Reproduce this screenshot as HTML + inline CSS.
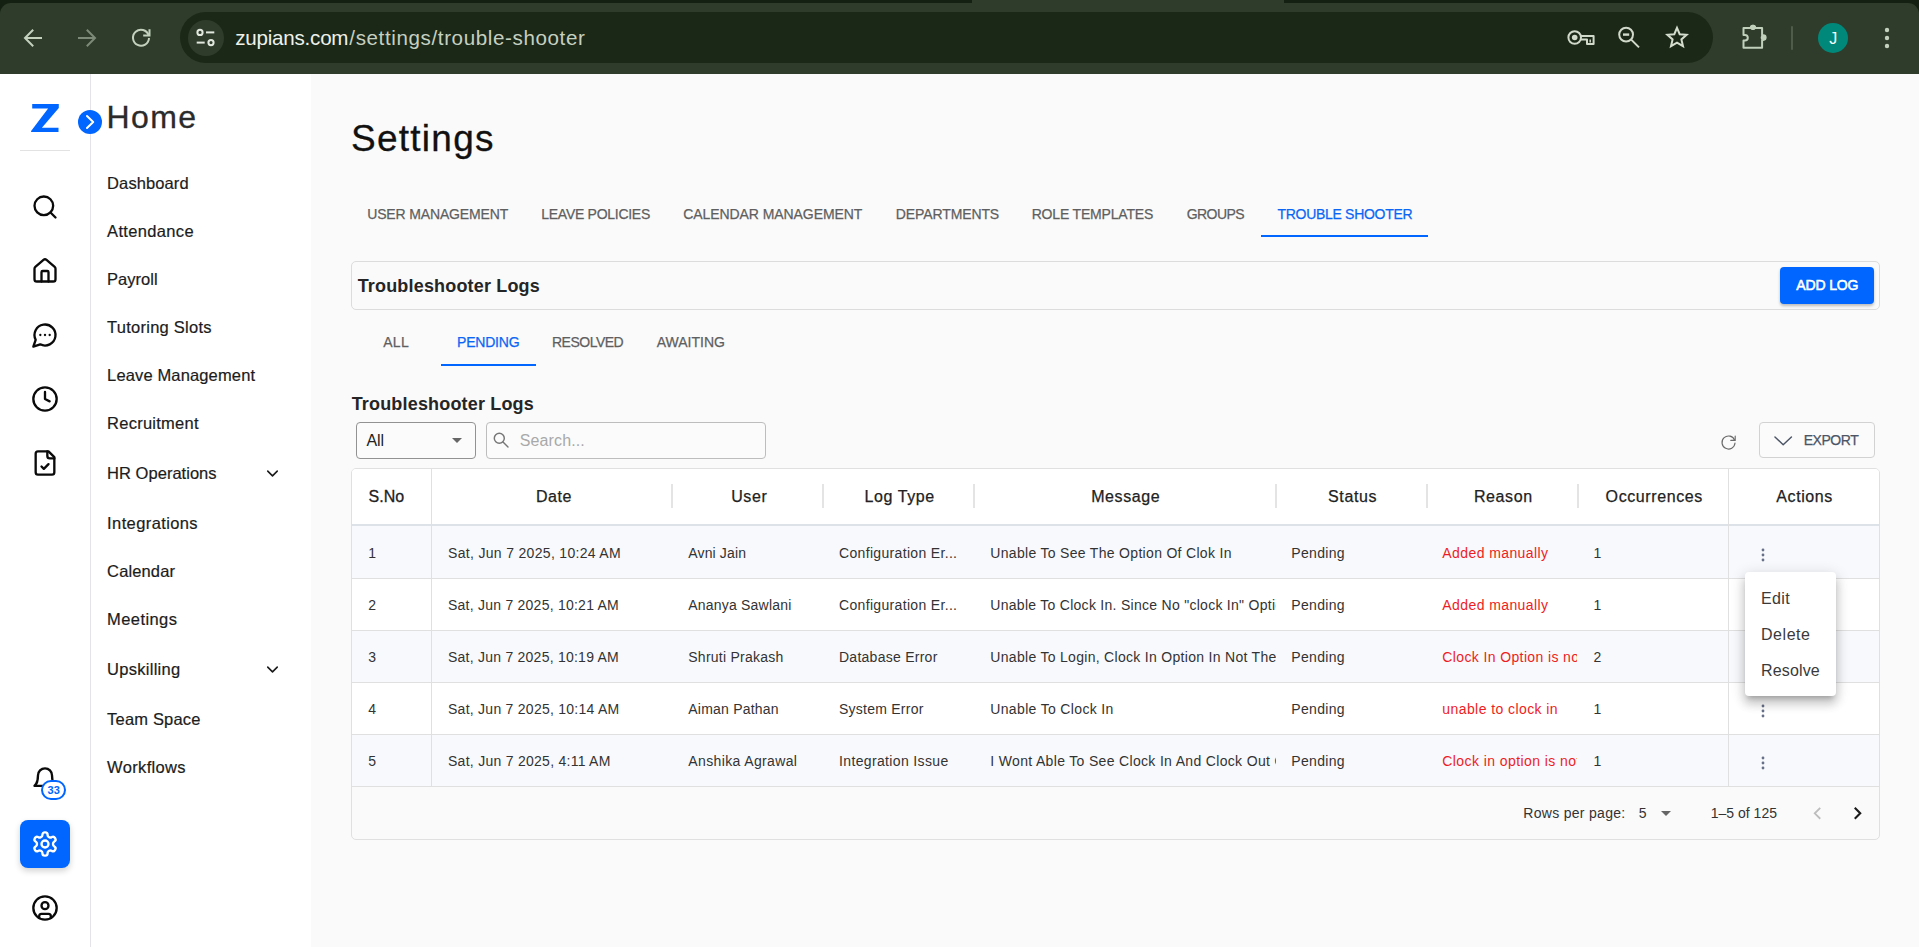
<!DOCTYPE html>
<html lang="en">
<head>
<meta charset="utf-8">
<title>Settings</title>
<style>
*{box-sizing:border-box;margin:0;padding:0}
html,body{width:1919px;height:947px;overflow:hidden;background:#fafafa;font-family:"Liberation Sans",sans-serif;color:#1a1a1a}
.a{position:absolute}
.t{position:absolute;white-space:nowrap;line-height:1}
svg{position:absolute;overflow:visible}
.lu{fill:none;stroke:#0a0a0a;stroke-width:2;stroke-linecap:round;stroke-linejoin:round}
/* browser chrome */
#chrome{position:absolute;left:0;top:0;width:1919px;height:74px;background:#2f3c2c;overflow:hidden}
#strip{position:absolute;left:0;top:0;width:1919px;height:14px;background:#142011}
#tbar{position:absolute;left:0;top:3px;width:1919px;height:71px;background:#2f3c2c;border-radius:11px 11px 0 0}
#acttab{position:absolute;left:972px;top:0;width:312px;height:6px;background:#2f3c2c}
#pill{position:absolute;left:180px;top:12px;width:1533px;height:51px;border-radius:26px;background:#1b2818}
#site{position:absolute;left:187.5px;top:19.5px;width:36px;height:36px;border-radius:50%;background:#2f3c2c}
#avatar{position:absolute;left:1818px;top:23px;width:30px;height:30px;border-radius:50%;background:#00897b}
#sepv{position:absolute;left:1791px;top:26px;width:2px;height:24px;background:#4f5c4a;border-radius:1px}
.ci{fill:none;stroke:#c4d1bd;stroke-width:2;stroke-linecap:butt;stroke-linejoin:miter}
/* rails */
#rail{position:absolute;left:0;top:74px;width:91px;height:873px;background:#fff;border-right:1px solid #e3e3e9}
#side{position:absolute;left:91px;top:74px;width:220px;height:873px;background:#fff}
</style>
</head>
<body>
<!-- ===== Browser chrome ===== -->
<div id="chrome">
  <div id="strip"></div>
  <div id="tbar"></div>
  <div id="acttab"></div>
  <div id="pill"></div>
  <div id="site"></div>
  <div id="sepv"></div>
  <div id="avatar"></div>
  <!-- back -->
  <svg class="ci" style="left:21px;top:26px" width="24" height="24" viewBox="0 0 24 24"><path d="M21 12H4.5M12.2 3.8 4 12l8.2 8.2"/></svg>
  <!-- forward (dim) -->
  <svg class="ci" style="left:75px;top:26px;stroke:#7d8a77" width="24" height="24" viewBox="0 0 24 24"><path d="M3 12h16.5M11.8 3.8 20 12l-8.2 8.2"/></svg>
  <!-- reload -->
  <svg class="ci" style="left:129px;top:26px" width="24" height="24" viewBox="0 0 24 24"><path d="M19.6 9.2A8 8 0 1 0 20 12"/><path d="M20.5 3.2v6.3h-6.3"/></svg>
  <!-- site settings (tune) -->
  <svg class="ci" style="left:193px;top:26px;stroke:#e3e8df" width="24" height="24" viewBox="0 0 24 24"><circle cx="7" cy="6.4" r="2.6"/><path d="M13 6.4h8.3"/><circle cx="18" cy="16.6" r="2.6"/><path d="M3.7 16.6h8"/></svg>
  <!-- key / zoom-out / puzzle (absolute coords) -->
  <svg style="left:0;top:0" width="1919" height="74" viewBox="0 0 1919 74" fill="none" stroke-width="2">
    <g stroke="#d1d9cb" stroke-linejoin="round">
      <circle cx="1574.7" cy="37.5" r="6.3"/>
      <circle cx="1574.7" cy="37.5" r="2.8" fill="#d1d9cb" stroke="none"/>
      <path d="M1580.8 36.1H1593.6V44H1587V39.6H1580.6"/>
      <path d="M1590.2 39.6v3" stroke-width="1.5"/>
      <circle cx="1626.1" cy="34.6" r="6.9"/>
      <path d="M1631.2 39.6 1639 47.4"/>
      <path d="M1623 34.6h6.2" stroke-width="2.4"/>
    </g>
    <path stroke="#c0d0ba" stroke-linejoin="round" d="M1743.5 28H1750.8a2.2 2.2 0 0 1 4.4 0H1762.1V35.3h1.2a2.3 2.3 0 0 1 0 4.6h-1.2V47.8H1743.5V40.6h1.5a2.8 2.8 0 0 0 0-5.6h-1.5Z"/>
    <circle cx="1753" cy="27.4" r="2.6" fill="#c0d0ba"/><circle cx="1763.4" cy="37.6" r="2.7" fill="#c0d0ba"/>
  </svg>
  <!-- star -->
  <svg class="ci" style="left:1665px;top:25px;stroke:#d3dccd" width="24" height="24" viewBox="0 0 24 24"><path d="M12 2.8l2.7 6.4 6.9.6-5.2 4.6 1.6 6.8-6-3.6-6 3.6 1.6-6.8-5.2-4.6 6.9-.6z" stroke-linejoin="miter"/></svg>
  <!-- kebab -->
  <svg style="left:1883px;top:26px" width="8" height="24" viewBox="0 0 8 24"><circle cx="4" cy="4" r="2.2" fill="#c4d1bd"/><circle cx="4" cy="12" r="2.2" fill="#c4d1bd"/><circle cx="4" cy="20" r="2.2" fill="#c4d1bd"/></svg>
</div>

<!-- ===== Icon rail ===== -->
<div id="rail"></div>
<div id="side"></div>
<!-- Z logo -->
<svg style="left:0;top:0" width="100" height="160" viewBox="0 0 100 160"><polygon fill="#0066ff" points="32.2,104 58.8,104 58.8,108 41.9,127.7 58.5,127.7 58.5,132.1 31.1,132.1 31.1,130.9 48.1,108.5 32.2,108.5"/></svg>
<div class="a" style="left:20px;top:150px;width:50px;height:1px;background:#e2e2e2"></div>
<!-- collapse chevron circle -->
<div class="a" style="left:78px;top:110px;width:24px;height:24px;border-radius:50%;background:#0066ff"></div>
<svg style="left:78px;top:110px" width="24" height="24" viewBox="0 0 24 24" fill="none" stroke="#fff" stroke-width="2" stroke-linecap="round" stroke-linejoin="round"><path d="m9 6 6.2 6L9 18"/></svg>
<!-- search -->
<svg class="lu" style="left:31px;top:193px" width="28" height="28" viewBox="0 0 24 24"><circle cx="11" cy="11" r="8"/><path d="m21 21-4.3-4.3"/></svg>
<!-- house -->
<svg class="lu" style="left:31px;top:257px" width="28" height="28" viewBox="0 0 24 24"><path d="M15 21v-8a1 1 0 0 0-1-1h-4a1 1 0 0 0-1 1v8"/><path d="M3 10a2 2 0 0 1 .709-1.528l7-5.999a2 2 0 0 1 2.582 0l7 5.999A2 2 0 0 1 21 10v9a2 2 0 0 1-2 2H5a2 2 0 0 1-2-2z"/></svg>
<!-- message-circle-more -->
<svg class="lu" style="left:31px;top:321px" width="28" height="28" viewBox="0 0 24 24"><path d="M7.9 20A9 9 0 1 0 4 16.1L2 22Z"/><path d="M8 12h.01"/><path d="M12 12h.01"/><path d="M16 12h.01"/></svg>
<!-- clock -->
<svg class="lu" style="left:31px;top:385px" width="28" height="28" viewBox="0 0 24 24"><circle cx="12" cy="12" r="10"/><polyline points="12 6 12 12 16 14"/></svg>
<!-- file-check -->
<svg class="lu" style="left:31px;top:449px" width="28" height="28" viewBox="0 0 24 24"><path d="M15 2H6a2 2 0 0 0-2 2v16a2 2 0 0 0 2 2h12a2 2 0 0 0 2-2V7Z"/><path d="M14 2v4a2 2 0 0 0 2 2h4"/><path d="m9 15 2 2 4-4"/></svg>
<!-- bell -->
<svg class="lu" style="left:31px;top:766px" width="28" height="28" viewBox="0 0 24 24"><path d="M6 8a6 6 0 0 1 12 0c0 7 3 9 3 9H3s3-2 3-9"/><path d="M10.3 21a1.94 1.94 0 0 0 3.4 0"/></svg>
<div class="a" style="left:41px;top:780px;width:25px;height:20px;border-radius:10px;background:#fff;border:2px solid #0066ff"></div>
<!-- settings active -->
<div class="a" style="left:20px;top:820px;width:50px;height:48px;border-radius:8px;background:#0066ff;box-shadow:0 3px 6px rgba(0,0,0,.18)"></div>
<svg class="lu" style="left:31px;top:830px;stroke:#fff" width="28" height="28" viewBox="0 0 24 24"><path d="M12.22 2h-.44a2 2 0 0 0-2 2v.18a2 2 0 0 1-1 1.73l-.43.25a2 2 0 0 1-2 0l-.15-.08a2 2 0 0 0-2.73.73l-.22.38a2 2 0 0 0 .73 2.73l.15.1a2 2 0 0 1 1 1.72v.51a2 2 0 0 1-1 1.74l-.15.09a2 2 0 0 0-.73 2.73l.22.38a2 2 0 0 0 2.73.73l.15-.08a2 2 0 0 1 2 0l.43.25a2 2 0 0 1 1 1.73V20a2 2 0 0 0 2 2h.44a2 2 0 0 0 2-2v-.18a2 2 0 0 1 1-1.73l.43-.25a2 2 0 0 1 2 0l.15.08a2 2 0 0 0 2.73-.73l.22-.39a2 2 0 0 0-.73-2.73l-.15-.08a2 2 0 0 1-1-1.74v-.5a2 2 0 0 1 1-1.74l.15-.09a2 2 0 0 0 .73-2.73l-.22-.38a2 2 0 0 0-2.73-.73l-.15.08a2 2 0 0 1-2 0l-.43-.25a2 2 0 0 1-1-1.73V4a2 2 0 0 0-2-2z"/><circle cx="12" cy="12" r="3"/></svg>
<!-- user -->
<svg class="lu" style="left:31px;top:894px" width="28" height="28" viewBox="0 0 24 24"><circle cx="12" cy="12" r="10"/><circle cx="12" cy="10" r="3"/><path d="M7 20.662V19a2 2 0 0 1 2-2h6a2 2 0 0 1 2 2v1.662"/></svg>
<!-- sidebar chevrons -->
<svg class="lu" style="left:263.4px;top:463.8px;stroke:#1a1a1a;stroke-width:2" width="19" height="19" viewBox="0 0 24 24"><path d="m6 9 6 6 6-6"/></svg>
<svg class="lu" style="left:263.4px;top:659.8px;stroke:#1a1a1a;stroke-width:2" width="19" height="19" viewBox="0 0 24 24"><path d="m6 9 6 6 6-6"/></svg>

<!-- top tab underline -->
<div class="a" style="left:1261px;top:235px;width:167px;height:2px;background:#0066ff"></div>
<!-- title card -->
<div class="a" style="left:351px;top:261px;width:1529px;height:49px;border:1px solid #dcdcdc;border-radius:5px;background:#fafafa"></div>
<div class="a" style="left:1780px;top:267px;width:94px;height:37px;border-radius:4px;background:#0066ff;box-shadow:0 2px 3px rgba(0,0,0,.25)"></div>
<!-- sub tab underline -->
<div class="a" style="left:441px;top:364px;width:95px;height:2px;background:#0066ff"></div>
<!-- select -->
<div class="a" style="left:356px;top:422px;width:120px;height:37px;border:1px solid #929292;border-radius:4px;background:#fbfbfb"></div>
<svg style="left:452px;top:438px" width="10" height="5" viewBox="0 0 10 5"><path d="M0 0h10L5 5z" fill="#666"/></svg>
<!-- search -->
<div class="a" style="left:486px;top:422px;width:280px;height:37px;border:1px solid #bdbdbd;border-radius:4px;background:#fbfbfb"></div>
<svg style="left:493px;top:432px" width="16" height="16" viewBox="0 0 16 16" fill="none" stroke="#767676" stroke-width="1.45" stroke-linecap="round"><circle cx="6.3" cy="6.3" r="5"/><path d="M10 10l5 5"/></svg>
<!-- refresh icon -->
<svg style="left:1720.3px;top:434px" width="17" height="17" viewBox="0 0 17 17" fill="none" stroke="#6a6a6a" stroke-width="1.15" stroke-linecap="round" stroke-linejoin="round"><path d="M14.6 6.2A6.5 6.5 0 1 0 15 9"/><path d="M15.2 2v4.4h-4.4"/></svg>
<!-- export -->
<div class="a" style="left:1759px;top:422px;width:116px;height:36px;border:1px solid #d2d2d2;border-radius:4px;background:#fbfbfb"></div>
<svg style="left:1774px;top:435.6px" width="18.4" height="9.7" viewBox="0 0 19 10" fill="none" stroke="#4b5565" stroke-width="1.5" stroke-linecap="round" stroke-linejoin="round"><path d="M1 1l8.5 8L18 1"/></svg>

<!-- table -->
<div class="a" id="tbl" style="left:351px;top:468px;width:1529px;height:372px;border:1px solid #e0e0e0;border-radius:5px;background:#fafafa;overflow:hidden">
  <div class="a" style="left:0;top:0;width:1527px;height:56px;background:#fff"></div>
  <div class="a" style="left:0;top:57px;width:1527px;height:52px;background:#f8f9fc"></div>
  <div class="a" style="left:0;top:109px;width:1527px;height:52px;background:#fff"></div>
  <div class="a" style="left:0;top:161px;width:1527px;height:52px;background:#f8f9fc"></div>
  <div class="a" style="left:0;top:213px;width:1527px;height:52px;background:#fff"></div>
  <div class="a" style="left:0;top:265px;width:1527px;height:52px;background:#f8f9fc"></div>
  <!-- row borders -->
  <div class="a" style="left:0;top:55px;width:1527px;height:2px;background:#dde1e8"></div>
  <div class="a" style="left:0;top:109px;width:1527px;height:1px;background:#e0e0e0"></div>
  <div class="a" style="left:0;top:161px;width:1527px;height:1px;background:#e0e0e0"></div>
  <div class="a" style="left:0;top:213px;width:1527px;height:1px;background:#e0e0e0"></div>
  <div class="a" style="left:0;top:265px;width:1527px;height:1px;background:#e0e0e0"></div>
  <div class="a" style="left:0;top:317px;width:1527px;height:1px;background:#e0e0e0"></div>
  <!-- pinned col borders -->
  <div class="a" style="left:79px;top:0;width:1px;height:318px;background:#e0e0e0"></div>
  <div class="a" style="left:1376px;top:0;width:1px;height:318px;background:#e0e0e0"></div>
  <!-- header separators -->
  <div class="a" style="left:319px;top:15px;width:2px;height:24px;background:#e4e4e4"></div>
  <div class="a" style="left:470px;top:15px;width:2px;height:24px;background:#e4e4e4"></div>
  <div class="a" style="left:621px;top:15px;width:2px;height:24px;background:#e4e4e4"></div>
  <div class="a" style="left:923px;top:15px;width:2px;height:24px;background:#e4e4e4"></div>
  <div class="a" style="left:1074px;top:15px;width:2px;height:24px;background:#e4e4e4"></div>
  <div class="a" style="left:1225px;top:15px;width:2px;height:24px;background:#e4e4e4"></div>
</div>
<!-- kebabs -->
<svg style="left:1760px;top:546.7px" width="6" height="16" viewBox="0 0 6 16"><circle cx="3" cy="3" r="1.4" fill="#667089"/><circle cx="3" cy="8" r="1.4" fill="#667089"/><circle cx="3" cy="13" r="1.4" fill="#667089"/></svg>
<svg style="left:1760px;top:702.7px" width="6" height="16" viewBox="0 0 6 16"><circle cx="3" cy="3" r="1.4" fill="#667089"/><circle cx="3" cy="8" r="1.4" fill="#667089"/><circle cx="3" cy="13" r="1.4" fill="#667089"/></svg>
<svg style="left:1760px;top:754.7px" width="6" height="16" viewBox="0 0 6 16"><circle cx="3" cy="3" r="1.4" fill="#667089"/><circle cx="3" cy="8" r="1.4" fill="#667089"/><circle cx="3" cy="13" r="1.4" fill="#667089"/></svg>
<!-- popup menu -->
<div class="a" style="left:1745px;top:572px;width:91px;height:124px;border-radius:4px;background:#fff;box-shadow:0 5px 5px -3px rgba(0,0,0,.2),0 8px 10px 1px rgba(0,0,0,.14),0 3px 14px 2px rgba(0,0,0,.12)"></div>
<!-- footer icons -->
<svg style="left:1661px;top:811px" width="10" height="5" viewBox="0 0 10 5"><path d="M0 0h10L5 5z" fill="#666"/></svg>
<svg style="left:1811.5px;top:805.8px" width="11" height="14.6" viewBox="0 0 12 16" fill="none" stroke="#bdbdbd" stroke-width="2"><path d="M9 2 3 8l6 6"/></svg>
<svg style="left:1851.5px;top:805.8px" width="11" height="14.6" viewBox="0 0 12 16" fill="none" stroke="#1a1a1a" stroke-width="2.3"><path d="M3 2l6 6-6 6"/></svg>

<div class="t" style="left:235.3px;top:28.3px;font-size:20.6px;color:#eef1ea;letter-spacing:-0.24px;">zupians.com</div>
<div class="t" style="left:349.3px;top:28.3px;font-size:20.6px;color:#c6d0c0;letter-spacing:0.61px;">/settings/trouble-shooter</div>
<div class="t" style="left:1829.2px;top:30.5px;font-size:16px;color:#fff;">J</div>
<div class="t" style="left:47.6px;top:784.8px;font-size:11px;color:#0066ff;font-weight:700;">33</div>
<div class="t" style="left:106.6px;top:101.0px;font-size:32px;color:#2b2b2b;letter-spacing:1.38px;-webkit-text-stroke:0.3px #2b2b2b;">Home</div>
<div class="t" style="left:107.1px;top:175.1px;font-size:16.5px;color:#1c1c1c;letter-spacing:0.1px;-webkit-text-stroke:0.2px #1c1c1c;">Dashboard</div>
<div class="t" style="left:107.1px;top:223.1px;font-size:16.5px;color:#1c1c1c;letter-spacing:0.34px;-webkit-text-stroke:0.2px #1c1c1c;">Attendance</div>
<div class="t" style="left:107.1px;top:271.1px;font-size:16.5px;color:#1c1c1c;letter-spacing:0.01px;-webkit-text-stroke:0.2px #1c1c1c;">Payroll</div>
<div class="t" style="left:107.1px;top:319.1px;font-size:16.5px;color:#1c1c1c;letter-spacing:0.25px;-webkit-text-stroke:0.2px #1c1c1c;">Tutoring Slots</div>
<div class="t" style="left:107.1px;top:367.1px;font-size:16.5px;color:#1c1c1c;letter-spacing:0.14px;-webkit-text-stroke:0.2px #1c1c1c;">Leave Management</div>
<div class="t" style="left:107.1px;top:415.1px;font-size:16.5px;color:#1c1c1c;letter-spacing:0.25px;-webkit-text-stroke:0.2px #1c1c1c;">Recruitment</div>
<div class="t" style="left:107.1px;top:465.1px;font-size:16.5px;color:#1c1c1c;letter-spacing:0.03px;-webkit-text-stroke:0.2px #1c1c1c;">HR Operations</div>
<div class="t" style="left:107.1px;top:515.1px;font-size:16.5px;color:#1c1c1c;letter-spacing:0.39px;-webkit-text-stroke:0.2px #1c1c1c;">Integrations</div>
<div class="t" style="left:107.1px;top:563.1px;font-size:16.5px;color:#1c1c1c;letter-spacing:0.13px;-webkit-text-stroke:0.2px #1c1c1c;">Calendar</div>
<div class="t" style="left:107.1px;top:611.1px;font-size:16.5px;color:#1c1c1c;letter-spacing:0.41px;-webkit-text-stroke:0.2px #1c1c1c;">Meetings</div>
<div class="t" style="left:107.1px;top:661.1px;font-size:16.5px;color:#1c1c1c;letter-spacing:0.27px;-webkit-text-stroke:0.2px #1c1c1c;">Upskilling</div>
<div class="t" style="left:107.1px;top:711.1px;font-size:16.5px;color:#1c1c1c;letter-spacing:0.18px;-webkit-text-stroke:0.2px #1c1c1c;">Team Space</div>
<div class="t" style="left:107.1px;top:759.1px;font-size:16.5px;color:#1c1c1c;letter-spacing:0.34px;-webkit-text-stroke:0.2px #1c1c1c;">Workflows</div>
<div class="t" style="left:351.0px;top:120.4px;font-size:37px;color:#111;letter-spacing:1.26px;-webkit-text-stroke:0.3px #111;">Settings</div>
<div class="t" style="left:367.2px;top:207.4px;font-size:14px;color:#5f5f5f;letter-spacing:-0.15px;-webkit-text-stroke:0.25px #5f5f5f;">USER MANAGEMENT</div>
<div class="t" style="left:541.3px;top:207.4px;font-size:14px;color:#5f5f5f;letter-spacing:-0.28px;-webkit-text-stroke:0.25px #5f5f5f;">LEAVE POLICIES</div>
<div class="t" style="left:683.3px;top:207.4px;font-size:14px;color:#5f5f5f;letter-spacing:-0.08px;-webkit-text-stroke:0.25px #5f5f5f;">CALENDAR MANAGEMENT</div>
<div class="t" style="left:895.8px;top:207.4px;font-size:14px;color:#5f5f5f;letter-spacing:-0.11px;-webkit-text-stroke:0.25px #5f5f5f;">DEPARTMENTS</div>
<div class="t" style="left:1031.7px;top:207.4px;font-size:14px;color:#5f5f5f;letter-spacing:-0.18px;-webkit-text-stroke:0.25px #5f5f5f;">ROLE TEMPLATES</div>
<div class="t" style="left:1186.7px;top:207.4px;font-size:14px;color:#5f5f5f;letter-spacing:-0.54px;-webkit-text-stroke:0.25px #5f5f5f;">GROUPS</div>
<div class="t" style="left:1277.5px;top:207.4px;font-size:14px;color:#0a66f5;letter-spacing:-0.3px;-webkit-text-stroke:0.25px #0a66f5;">TROUBLE SHOOTER</div>
<div class="t" style="left:357.7px;top:276.8px;font-size:18px;color:#252525;font-weight:700;letter-spacing:0.17px;">Troubleshooter Logs</div>
<div class="t" style="left:1796.2px;top:277.9px;font-size:14px;color:#fff;letter-spacing:-0.12px;-webkit-text-stroke:0.55px #fff;">ADD LOG</div>
<div class="t" style="left:383.3px;top:335.4px;font-size:14px;color:#5f5f5f;letter-spacing:0.24px;-webkit-text-stroke:0.25px #5f5f5f;">ALL</div>
<div class="t" style="left:457.0px;top:335.4px;font-size:14px;color:#0a66f5;letter-spacing:-0.2px;-webkit-text-stroke:0.25px #0a66f5;">PENDING</div>
<div class="t" style="left:552.0px;top:335.4px;font-size:14px;color:#5f5f5f;letter-spacing:-0.5px;-webkit-text-stroke:0.25px #5f5f5f;">RESOLVED</div>
<div class="t" style="left:656.7px;top:335.4px;font-size:14px;color:#5f5f5f;letter-spacing:0.02px;-webkit-text-stroke:0.25px #5f5f5f;">AWAITING</div>
<div class="t" style="left:351.7px;top:394.6px;font-size:18px;color:#252525;font-weight:700;letter-spacing:0.17px;">Troubleshooter Logs</div>
<div class="t" style="left:366.4px;top:432.9px;font-size:16px;color:#222;letter-spacing:-0.09px;">All</div>
<div class="t" style="left:519.8px;top:432.9px;font-size:16px;color:#a9a9a9;letter-spacing:0.11px;">Search...</div>
<div class="t" style="left:1803.7px;top:433.1px;font-size:14px;color:#4b5565;letter-spacing:-0.46px;-webkit-text-stroke:0.25px #4b5565;">EXPORT</div>
<div class="t" style="left:368.4px;top:489.0px;font-size:16px;color:#222;letter-spacing:0.07px;-webkit-text-stroke:0.3px #222;">S.No</div>
<div class="t" style="left:535.9px;top:489.0px;font-size:16px;color:#222;letter-spacing:0.6px;-webkit-text-stroke:0.25px #222;">Date</div>
<div class="t" style="left:731.2px;top:489.0px;font-size:16px;color:#222;letter-spacing:0.6px;-webkit-text-stroke:0.25px #222;">User</div>
<div class="t" style="left:864.4px;top:489.0px;font-size:16px;color:#222;letter-spacing:0.6px;-webkit-text-stroke:0.25px #222;">Log Type</div>
<div class="t" style="left:1091.2px;top:489.0px;font-size:16px;color:#222;letter-spacing:0.6px;-webkit-text-stroke:0.25px #222;">Message</div>
<div class="t" style="left:1328.1px;top:489.0px;font-size:16px;color:#222;letter-spacing:0.6px;-webkit-text-stroke:0.25px #222;">Status</div>
<div class="t" style="left:1473.9px;top:489.0px;font-size:16px;color:#222;letter-spacing:0.6px;-webkit-text-stroke:0.25px #222;">Reason</div>
<div class="t" style="left:1605.6px;top:489.0px;font-size:16px;color:#222;letter-spacing:0.6px;-webkit-text-stroke:0.25px #222;">Occurrences</div>
<div class="t" style="left:1776.3px;top:489.0px;font-size:16px;color:#222;letter-spacing:0.6px;-webkit-text-stroke:0.25px #222;">Actions</div>
<div class="t" style="left:368.3px;top:546.4px;font-size:14px;color:#333;">1</div>
<div class="t" style="left:448.0px;top:546.4px;font-size:14px;color:#333;letter-spacing:0.32px;">Sat, Jun 7 2025, 10:24 AM</div>
<div class="t" style="left:688.3px;top:546.4px;font-size:14px;color:#333;letter-spacing:0.14px;">Avni Jain</div>
<div class="t" style="left:839.0px;top:546.4px;font-size:14px;color:#333;letter-spacing:0.33px;">Configuration Er...</div>
<div class="t" style="left:990.3px;top:546.4px;font-size:14px;color:#333;letter-spacing:0.31px;">Unable To See The Option Of Clok In</div>
<div class="t" style="left:1291.3px;top:546.4px;font-size:14px;color:#333;letter-spacing:0.33px;">Pending</div>
<div class="t" style="left:1442.3px;top:546.4px;font-size:14px;color:#ee1d23;letter-spacing:0.41px;">Added manually</div>
<div class="t" style="left:1593.5px;top:546.4px;font-size:14px;color:#333;">1</div>
<div class="t" style="left:368.3px;top:598.4px;font-size:14px;color:#333;">2</div>
<div class="t" style="left:448.0px;top:598.4px;font-size:14px;color:#333;letter-spacing:0.24px;">Sat, Jun 7 2025, 10:21 AM</div>
<div class="t" style="left:688.3px;top:598.4px;font-size:14px;color:#333;letter-spacing:0.2px;">Ananya Sawlani</div>
<div class="t" style="left:839.0px;top:598.4px;font-size:14px;color:#333;letter-spacing:0.33px;">Configuration Er...</div>
<div class="t" style="left:990.3px;top:596.3px;font-size:14px;color:#333;letter-spacing:0.28px;width:285.4px;overflow:hidden;height:18px;line-height:18px;">Unable To Clock In. Since No &quot;clock In&quot; Option</div>
<div class="t" style="left:1291.3px;top:598.4px;font-size:14px;color:#333;letter-spacing:0.33px;">Pending</div>
<div class="t" style="left:1442.3px;top:598.4px;font-size:14px;color:#ee1d23;letter-spacing:0.41px;">Added manually</div>
<div class="t" style="left:1593.5px;top:598.4px;font-size:14px;color:#333;">1</div>
<div class="t" style="left:368.3px;top:650.4px;font-size:14px;color:#333;">3</div>
<div class="t" style="left:448.0px;top:650.4px;font-size:14px;color:#333;letter-spacing:0.24px;">Sat, Jun 7 2025, 10:19 AM</div>
<div class="t" style="left:688.3px;top:650.4px;font-size:14px;color:#333;letter-spacing:0.24px;">Shruti Prakash</div>
<div class="t" style="left:839.0px;top:650.4px;font-size:14px;color:#333;letter-spacing:0.26px;">Database Error</div>
<div class="t" style="left:990.3px;top:648.3px;font-size:14px;color:#333;letter-spacing:0.3px;width:285.4px;overflow:hidden;height:18px;line-height:18px;">Unable To Login, Clock In Option In Not There</div>
<div class="t" style="left:1291.3px;top:650.4px;font-size:14px;color:#333;letter-spacing:0.33px;">Pending</div>
<div class="t" style="left:1442.3px;top:648.3px;font-size:14px;color:#ee1d23;letter-spacing:0.38px;width:134.4px;overflow:hidden;height:18px;line-height:18px;">Clock In Option is not</div>
<div class="t" style="left:1593.5px;top:650.4px;font-size:14px;color:#333;">2</div>
<div class="t" style="left:368.3px;top:702.4px;font-size:14px;color:#333;">4</div>
<div class="t" style="left:448.0px;top:702.4px;font-size:14px;color:#333;letter-spacing:0.26px;">Sat, Jun 7 2025, 10:14 AM</div>
<div class="t" style="left:688.3px;top:702.4px;font-size:14px;color:#333;letter-spacing:0.22px;">Aiman Pathan</div>
<div class="t" style="left:839.0px;top:702.4px;font-size:14px;color:#333;letter-spacing:0.24px;">System Error</div>
<div class="t" style="left:990.3px;top:702.4px;font-size:14px;color:#333;letter-spacing:0.34px;">Unable To Clock In</div>
<div class="t" style="left:1291.3px;top:702.4px;font-size:14px;color:#333;letter-spacing:0.33px;">Pending</div>
<div class="t" style="left:1442.3px;top:702.4px;font-size:14px;color:#ee1d23;letter-spacing:0.42px;">unable to clock in</div>
<div class="t" style="left:1593.5px;top:702.4px;font-size:14px;color:#333;">1</div>
<div class="t" style="left:368.3px;top:754.4px;font-size:14px;color:#333;">5</div>
<div class="t" style="left:448.0px;top:754.4px;font-size:14px;color:#333;letter-spacing:0.27px;">Sat, Jun 7 2025, 4:11 AM</div>
<div class="t" style="left:688.3px;top:754.4px;font-size:14px;color:#333;letter-spacing:0.37px;">Anshika Agrawal</div>
<div class="t" style="left:839.0px;top:754.4px;font-size:14px;color:#333;letter-spacing:0.36px;">Integration Issue</div>
<div class="t" style="left:990.3px;top:752.3px;font-size:14px;color:#333;letter-spacing:0.33px;width:285.4px;overflow:hidden;height:18px;line-height:18px;">I Wont Able To See Clock In And Clock Out Option</div>
<div class="t" style="left:1291.3px;top:754.4px;font-size:14px;color:#333;letter-spacing:0.33px;">Pending</div>
<div class="t" style="left:1442.3px;top:752.3px;font-size:14px;color:#ee1d23;letter-spacing:0.42px;width:134.4px;overflow:hidden;height:18px;line-height:18px;">Clock in option is not</div>
<div class="t" style="left:1593.5px;top:754.4px;font-size:14px;color:#333;">1</div>
<div class="t" style="left:1761.0px;top:590.6px;font-size:16px;color:#3a3a3a;letter-spacing:0.34px;">Edit</div>
<div class="t" style="left:1761.0px;top:626.6px;font-size:16px;color:#3a3a3a;letter-spacing:0.55px;">Delete</div>
<div class="t" style="left:1761.0px;top:662.6px;font-size:16px;color:#3a3a3a;letter-spacing:0.15px;">Resolve</div>
<div class="t" style="left:1523.3px;top:805.9px;font-size:14px;color:#333;letter-spacing:0.3px;">Rows per page:</div>
<div class="t" style="left:1638.8px;top:805.9px;font-size:14px;color:#333;">5</div>
<div class="t" style="left:1710.8px;top:805.9px;font-size:14px;color:#333;">1–5 of 125</div>
</body>
</html>
